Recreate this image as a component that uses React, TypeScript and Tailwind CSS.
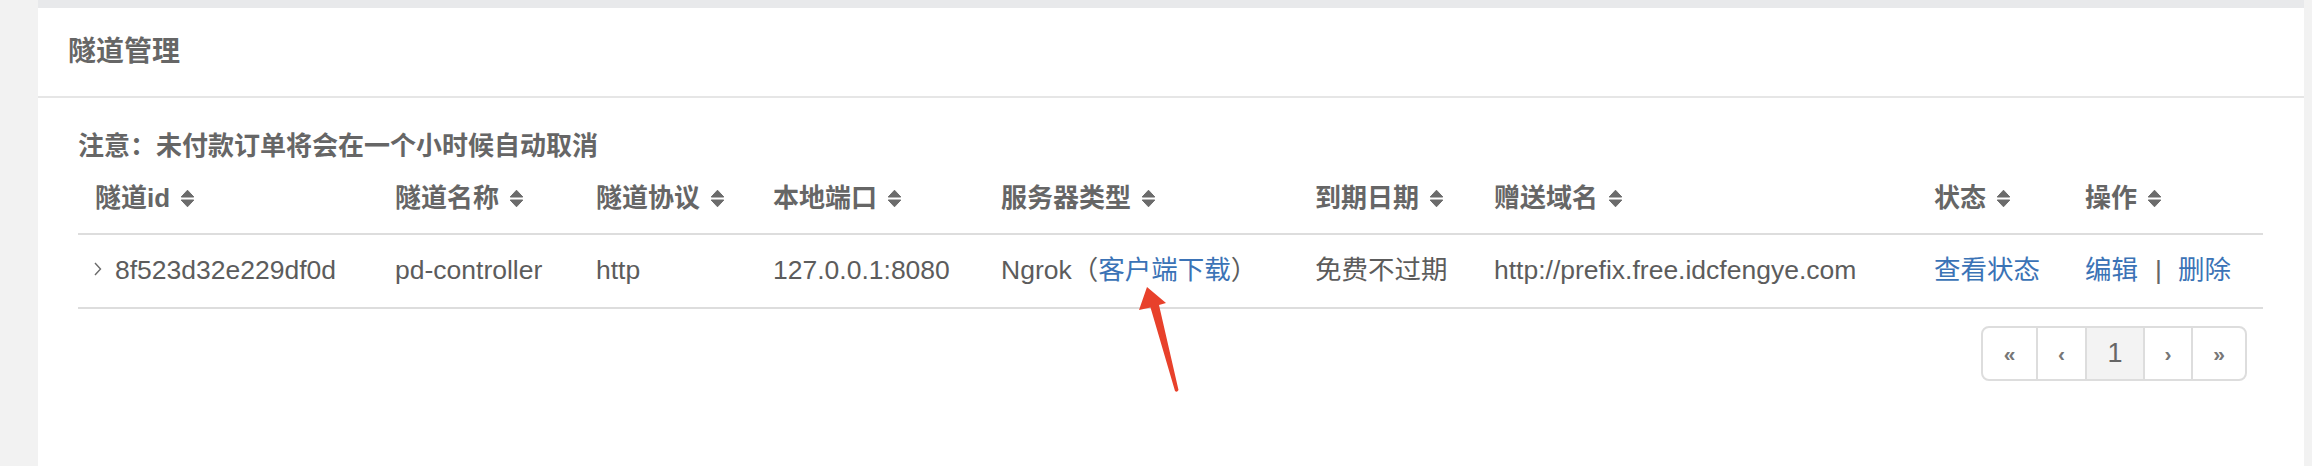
import React from "react";

const font = "font-['Liberation_Sans','Noto_Sans_CJK_SC',sans-serif]";

const columns = [
    {title: "隧道id", width: "w-[300px]"},
    {title: "隧道名称", width: "w-[201px]"},
    {title: "隧道协议", width: "w-[177px]"},
    {title: "本地端口", width: "w-[228px]"},
    {title: "服务器类型", width: "w-[314px]"},
    {title: "到期日期", width: "w-[179px]"},
    {title: "赠送域名", width: "w-[440px]"},
    {title: "状态", width: "w-[151px]"},
    {title: "操作", width: "w-[195px]"},
];

function SortIcon() {
    return (
        <svg width="15" height="19" viewBox="0 0 15 19" className="ml-[10px] shrink-0">
            <path d="M1.2 8 L7.5 1.2 L13.8 8 Z" fill="#6b6b6b" stroke="#6b6b6b" strokeLinejoin="round" />
            <path d="M1.2 11 L7.5 17.8 L13.8 11 Z" fill="#6b6b6b" stroke="#6b6b6b" strokeLinejoin="round" />
        </svg>
    );
}

function Cell(props: {width: string; children: React.ReactNode}) {
    return <div className={`${props.width} flex items-center pl-[17px] shrink-0`}>{props.children}</div>;
}

function Pager() {
    const items = [
        {label: "«", w: "w-[53px]", active: false},
        {label: "‹", w: "w-[49px]", active: false},
        {label: "1", w: "w-[58px]", active: true},
        {label: "›", w: "w-[48px]", active: false},
        {label: "»", w: "w-[54px]", active: false},
    ];
    return (
        <div className="flex h-[55px] border-2 border-[#dddddd] rounded-[8px] overflow-hidden">
            {items.map((it, i) => (
                <div
                    key={i}
                    className={`${it.w} flex items-center justify-center ${i > 0 ? "border-l-2 border-[#dddddd]" : ""} ${
                        it.active ? "bg-[#f3f3f3] text-[27px] text-[#666666]" : "text-[21px] font-bold text-[#777777]"
                    }`}
                >
                    {it.label}
                </div>
            ))}
        </div>
    );
}

export default function App() {
    return (
        <div className={`w-[2312px] h-[466px] bg-[#f2f2f2] flex pl-[38px] pr-[8px] overflow-hidden ${font}`}>
            <div className="flex-1 flex flex-col bg-white relative">
                <div className="h-[8px] bg-[#e8e9eb]" />
                <div className="h-[88px] flex items-center pl-[30px]">
                    <h1 className="text-[28px] font-bold text-[#666666]">隧道管理</h1>
                </div>
                <div className="h-[2px] bg-[#e6e6e6]" />

                <div className="flex flex-col pl-[40px] pr-[41px]">
                    <p className="pt-[30px] h-[66px] text-[26px] leading-[36px] font-bold text-[#666666]">
                        注意：未付款订单将会在一个小时候自动取消
                    </p>

                    <div className="flex h-[71px] border-b-2 border-[#dddddd] text-[26px] font-bold text-[#666666]">
                        {columns.map(c => (
                            <Cell key={c.title} width={c.width}>
                                <span>{c.title}</span>
                                <SortIcon />
                            </Cell>
                        ))}
                    </div>

                    <div className="flex h-[74px] border-b-2 border-[#dddddd] text-[26.5px] text-[#5c5c5c]">
                        <Cell width="w-[300px]">
                            <svg width="8" height="14" viewBox="0 0 8 14" className="-ml-[1px] mr-[13px] mb-[4px]">
                                <path d="M1 1 L6.5 7 L1 13" fill="none" stroke="#6a6a6a" strokeWidth="1.4" />
                            </svg>
                            <span>8f523d32e229df0d</span>
                        </Cell>
                        <Cell width="w-[201px]">pd-controller</Cell>
                        <Cell width="w-[177px]">http</Cell>
                        <Cell width="w-[228px]">127.0.0.1:8080</Cell>
                        <Cell width="w-[314px]">
                            <span>Ngrok（</span>
                            <a className="text-[#3b73b6]">客户端下载</a>
                            <span>）</span>
                        </Cell>
                        <Cell width="w-[179px]">免费不过期</Cell>
                        <Cell width="w-[440px]">http://prefix.free.idcfengye.com</Cell>
                        <Cell width="w-[151px]">
                            <a className="text-[#3b73b6]">查看状态</a>
                        </Cell>
                        <Cell width="w-[195px]">
                            <a className="text-[#3b73b6]">编辑</a>
                            <span className="ml-[17px] mr-[16px] text-[#666666]">|</span>
                            <a className="text-[#3b73b6]">删除</a>
                        </Cell>
                    </div>

                    <div className="flex justify-end mt-[17px] pr-[16px]">
                        <Pager />
                    </div>
                </div>

                {/* red annotation arrow pointing at the download link */}
                <svg
                    width="60"
                    height="120"
                    viewBox="0 0 60 120"
                    className="absolute left-[1092px] top-[280px] pointer-events-none"
                >
                    <path
                        d="M17 7 L36 23 L29 25 L48.5 110 Q47 113 45 111 L20.5 27.5 L9 30 Z"
                        fill="#e8412b"
                        strokeLinejoin="round"
                    />
                </svg>
            </div>
        </div>
    );
}
